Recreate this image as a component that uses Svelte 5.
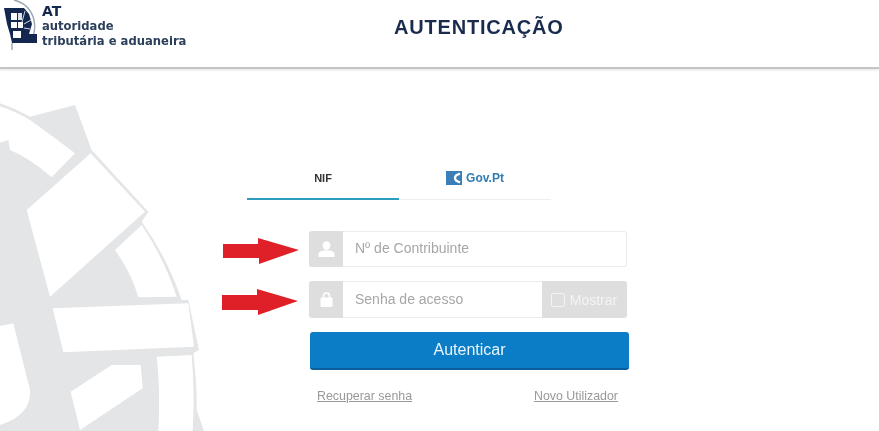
<script>
	let nif = '';
	let senha = '';
	let mostrar = false;
	let tab = 'nif';
</script>

<div class="page">
	<svg class="watermark" viewBox="0 0 660 1023" width="220" height="341" aria-hidden="true">
		<path class="wm-grey" d="M0 40 Q45 55 90 80 L225 45 L275 180 L445 365 L425 395 Q500 500 545 630 L565 630 L597 780 L580 790 Q592 900 590 960 L612 1023 L0 1023 Z" />
		<path class="wm-white" d="M0 49 Q50 66 90 90 Q160 140 225 190 L155 262 Q90 205 30 180 L25 150 L0 158 Z" />
		<path class="wm-white" d="M272 190 L435 365 L150 620 L80 360 Z" />
		<path class="wm-white" d="M425 405 L345 480 Q395 550 415 622 L530 620 Q490 500 425 405 Z" />
		<path class="wm-white" d="M158 655 L565 640 L582 770 L190 787 Z" />
		<path class="wm-white" d="M470 800 L575 795 Q585 910 578 1023 L475 1023 Q482 900 470 800 Z" />
		<path class="wm-white" d="M212 905 L335 825 L422 825 L428 895 L240 1020 Z" />
		<path class="wm-white" d="M0 708 L40 700 L90 900 Q95 975 0 1005 Z" />
	</svg>

	<header class="topbar">
		<div class="brand">
			<svg class="crest" viewBox="0 0 36 50" width="36" height="50" aria-hidden="true">
				<path class="crest-ring" d="M11 0 Q27 4 31 20 Q34 36 24 43 M9 43 L9 50" />
				<path class="crest-navy" d="M1 8 L21 8 L26 14 L29 24 L26 34 L34 34 L34 43 L9 43 L7 34 L4 24 Z" />
				<path class="crest-stripe" d="M22 11 L19 22 M28 20 L21 24 M27 29 L21 28" />
				<rect x="8" y="13" width="6" height="7" fill="#fff" />
				<rect x="15" y="13" width="4" height="7" fill="#dfe3e9" />
				<rect x="8" y="22" width="6" height="6" fill="#fff" />
				<rect x="15" y="22" width="5" height="6" fill="#fff" />
				<rect x="10" y="31" width="8" height="7" fill="#fff" />
			</svg>
			<div class="brand-text">
				<strong>AT</strong>
				<span>autoridade</span>
				<span>tributária e aduaneira</span>
			</div>
		</div>
		<h1>AUTENTICAÇÃO</h1>
	</header>

	<main class="content">
		<nav class="tabs">
			<button class="tab" class:active={tab === 'nif'} on:click={() => (tab = 'nif')}>NIF</button>
			<button class="tab gov" class:active={tab === 'gov'} on:click={() => (tab = 'gov')}>
				<svg viewBox="0 0 16 14" width="16" height="14" aria-hidden="true">
					<rect width="16" height="14" fill="#3a7fb8" />
					<path d="M14 2.5 L10 4.5 Q8 7 10 9.5 L14 11.5" fill="none" stroke="#fff" stroke-width="2.2" />
				</svg>
				Gov.Pt
			</button>
		</nav>

		<form class="login" on:submit|preventDefault>
			<div class="field first">
				<svg class="arrow" viewBox="0 0 76 26" width="76" height="26" aria-hidden="true">
					<path d="M0 6 L35 6 L35 0 L76 12 L36 26 L36 20 L0 20 Z" />
				</svg>
				<span class="addon icon">
					<svg viewBox="0 0 17 16" width="17" height="16" aria-hidden="true">
						<ellipse cx="8.5" cy="4.6" rx="3.9" ry="4.4" />
						<path d="M0.5 16 L0.5 13 Q1 10.2 5.5 9.4 L11.5 9.4 Q16 10.2 16.5 13 L16.5 16 Z" />
					</svg>
				</span>
				<input type="text" placeholder="Nº de Contribuinte" bind:value={nif} />
			</div>

			<div class="field second">
				<svg class="arrow" viewBox="0 0 76 26" width="76" height="26" aria-hidden="true">
					<path d="M0 6 L35 6 L35 0 L76 12 L36 26 L36 21 L0 21 Z" />
				</svg>
				<span class="addon icon">
					<svg viewBox="0 0 13 15" width="13" height="15" aria-hidden="true">
						<path d="M3.5 6 V4 a3 3 0 0 1 6 0 V6" fill="none" stroke="#fff" stroke-width="1.6" />
						<rect x="0.5" y="5.5" width="12" height="9.5" rx="1" />
					</svg>
				</span>
				<input type={mostrar ? 'text' : 'password'} placeholder="Senha de acesso" bind:value={senha} />
				<label class="addon show">
					<input type="checkbox" bind:checked={mostrar} />
					Mostrar
				</label>
			</div>

			<button class="submit" type="submit">Autenticar</button>

			<div class="links">
				<a href="#recuperar">Recuperar senha</a>
				<a href="#novo">Novo Utilizador</a>
			</div>
		</form>
	</main>
</div>

<style>
	:global(body) {
		background: #fff;
	}

	.page {
		position: relative;
		height: 431px;
		overflow: hidden;
		background: #fff;
		font-family: "Liberation Sans", Arial, sans-serif;
		filter: blur(0.35px);
	}

	.watermark {
		position: absolute;
		left: 0;
		top: 90px;
	}

	.wm-grey {
		fill: #e3e5e7;
	}

	.wm-white {
		fill: #fff;
	}

	.topbar {
		position: relative;
		display: flex;
		align-items: flex-start;
		height: 67px;
		border-bottom: 2px solid #c4c5c6;
		box-shadow: 0 1px 2px rgba(0, 0, 0, 0.12);
		background: #fff;
		box-sizing: content-box;
	}

	.brand {
		display: flex;
		gap: 3px;
		width: 394px;
		padding-left: 3px;
		box-sizing: border-box;
		color: #1c2f52;
	}

	.crest-ring {
		fill: none;
		stroke: #9aa6b4;
		stroke-width: 1.4;
	}

	.crest-navy {
		fill: #14284f;
	}

	.crest-stripe {
		fill: none;
		stroke: #cfd5de;
		stroke-width: 1;
	}

	.brand-text {
		display: flex;
		flex-direction: column;
		font-family: "DejaVu Sans", sans-serif;
		font-size: 11.6px;
		font-weight: 600;
		line-height: 14.5px;
		padding-top: 3px;
	}

	.brand-text strong {
		font-size: 14px;
		line-height: 16px;
		color: #14284f;
	}

	.brand-text span {
		color: #2c3f5c;
	}

	h1 {
		margin: 15px 0 0;
		font-size: 20px;
		font-weight: 700;
		letter-spacing: 0.8px;
		line-height: 24px;
		color: #1a2c4e;
	}

	.content {
		position: relative;
		padding: 85px 0 0 247px;
	}

	.tabs {
		display: flex;
		width: 304px;
		border-bottom: 1px solid #eef0f0;
	}

	.tab {
		display: flex;
		flex: 1;
		align-items: center;
		justify-content: center;
		gap: 4px;
		height: 46px;
		padding: 4px 0 0;
		margin-bottom: -1px;
		border: 0;
		border-bottom: 2px solid transparent;
		background: none;
		font: 700 11px "Liberation Sans", Arial, sans-serif;
		color: #333;
		cursor: pointer;
	}

	.tab.active {
		border-bottom-color: #2d9cbd;
	}

	.tab.gov {
		font-size: 12px;
		color: #2f7db3;
	}

	.login {
		display: flex;
		flex-direction: column;
		width: 320px;
		margin: 31px 0 0 62px;
	}

	.field {
		position: relative;
		display: flex;
		width: 318px;
		background: #fff;
	}

	.field.first {
		height: 36px;
	}

	.field.second {
		height: 37px;
		margin-top: 14px;
	}

	.arrow {
		position: absolute;
		left: -86px;
		top: 7px;
		fill: #e02028;
	}

	.field.second .arrow {
		left: -87px;
		top: 8px;
	}

	.addon {
		display: flex;
		align-items: center;
		justify-content: center;
		background: #dedede;
		color: #f4f4f4;
	}

	.addon.icon {
		flex: none;
		width: 34px;
		border-radius: 3px 0 0 3px;
		fill: #fff;
	}

	.field input[type='text'],
	.field input[type='password'] {
		flex: 1;
		min-width: 0;
		padding: 0 12px 2px;
		border: 1px solid #ececec;
		border-left: 0;
		border-radius: 0 3px 3px 0;
		outline: 0;
		background: transparent;
		font: 14px "Liberation Sans", Arial, sans-serif;
		color: #555;
	}

	.field.second input[type='text'],
	.field.second input[type='password'] {
		border-right: 0;
		border-radius: 0;
	}

	.field input::placeholder {
		color: #a6a6a6;
		opacity: 1;
	}

	.addon.show {
		flex: none;
		gap: 5px;
		width: 85px;
		padding-right: 1px;
		box-sizing: border-box;
		border-radius: 0 3px 3px 0;
		font-size: 14px;
	}

	.addon.show input {
		appearance: none;
		width: 14px;
		height: 14px;
		margin: 0;
		border: 1px solid #f4f4f4;
		border-radius: 2px;
	}

	.submit {
		width: 319px;
		height: 38px;
		margin: 14px 0 0 1px;
		border: 0;
		border-bottom: 2px solid #0a5f9a;
		border-radius: 3px;
		background: #0b7dc6;
		color: #eaf5fc;
		font: 16px "Liberation Sans", Arial, sans-serif;
		cursor: pointer;
	}

	.links {
		display: flex;
		justify-content: space-between;
		margin-top: 19px;
		padding: 0 11px 0 8px;
		font-size: 12.4px;
	}

	.links a {
		color: #999;
	}
</style>
